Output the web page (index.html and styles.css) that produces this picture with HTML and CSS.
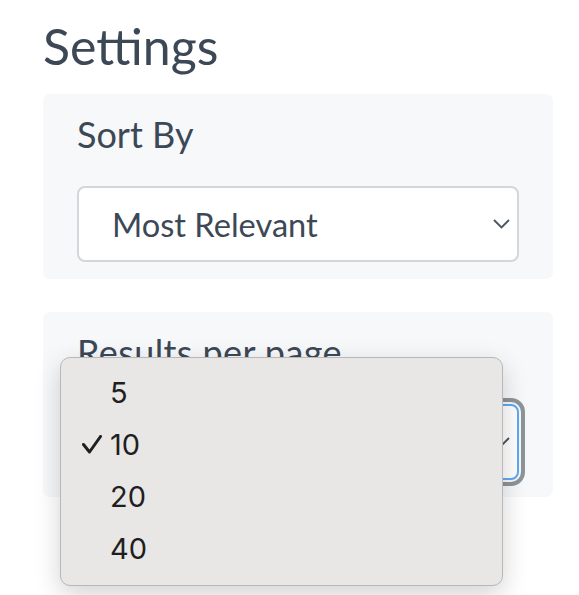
FILE: index.html
```html
<!DOCTYPE html>
<html lang="en">
<head>
<meta charset="utf-8">
<title>Settings</title>
<link rel="stylesheet" href="styles.css">
</head>
<body>
<main class="settings">
  <h1 class="title">Settings</h1>
  <section class="card">
    <label class="label">Sort By</label>
    <div class="select">
      <span class="select-value">Most Relevant</span>
      <svg class="chevron" width="17" height="10" viewBox="0 0 17 10"><polyline points="1,1 8.5,8.5 16,1" fill="none" stroke="#4b5563" stroke-width="1.9"/></svg>
    </div>
  </section>
  <section class="card">
    <label class="label label-wide">Results per page</label>
    <div class="select focused">
      <span class="select-value">10</span>
      <svg class="chevron" width="17" height="10" viewBox="0 0 17 10"><polyline points="1,1 8.5,8.5 16,1" fill="none" stroke="#4b5563" stroke-width="1.9"/></svg>
    </div>
  </section>
</main>
<ul class="menu">
  <li class="menu-item"><span class="check"></span><span>5</span></li>
  <li class="menu-item"><span class="check"><svg width="20" height="19" viewBox="0 0 20 19"><polyline points="1.5,9.5 7.5,17 18.5,1.5" fill="none" stroke="#1f1f1f" stroke-width="3" stroke-linecap="round" stroke-linejoin="round"/></svg></span><span>10</span></li>
  <li class="menu-item"><span class="check"></span><span>20</span></li>
  <li class="menu-item"><span class="check"></span><span>40</span></li>
</ul>
</body>
</html>
```
FILE: styles.css
```css
html, body {
  margin: 0;
  padding: 0;
  background: #ffffff;
}
body {
  font-family: "Lato", "Noto Sans", sans-serif;
  color: #3c4856;
}
.settings {
  width: 510px;
  padding: 18px 0 0 43px;
}
.title {
  margin: 0 0 20px 0;
  font-size: 50px;
  line-height: 56px;
  font-weight: 400;
}
.card {
  background: #f7f8fa;
  border-radius: 7px;
  padding: 16px 34px 17px 34px;
  margin-bottom: 33px;
  display: flex;
  flex-direction: column;
}
.label {
  font-size: 36px;
  line-height: 48px;
  display: block;
}
.label-wide {
  letter-spacing: 0.4px;
}
.select {
  margin-top: 28px;
  height: 76px;
  box-sizing: border-box;
  border: 2px solid #d3d6da;
  border-radius: 8px;
  background: #ffffff;
  display: flex;
  align-items: center;
  justify-content: space-between;
  padding: 0 7px 0 33px;
}
.select-value {
  font-size: 32.6px;
}
.focused {
  border-color: #5ea9f1;
  outline: 4px solid #8d949a;
  outline-offset: 2px;
}
.menu {
  position: absolute;
  left: 60px;
  top: 357px;
  width: 443px;
  height: 229px;
  box-sizing: border-box;
  margin: 0;
  padding: 8px 0 12px 0;
  list-style: none;
  background: #e8e7e5;
  border: 1px solid #b8b8b8;
  border-radius: 10px;
  box-shadow: 0 8px 26px rgba(0, 0, 0, 0.18);
  font-family: "Inter", "Roboto", sans-serif;
  color: #1f1f1f;
}
.menu-item {
  height: 52px;
  display: grid;
  grid-template-columns: 28px 1fr;
  align-items: center;
  padding-left: 21px;
  font-size: 29px;
}
.check {
  display: flex;
  align-items: center;
  height: 20px;
}
```
